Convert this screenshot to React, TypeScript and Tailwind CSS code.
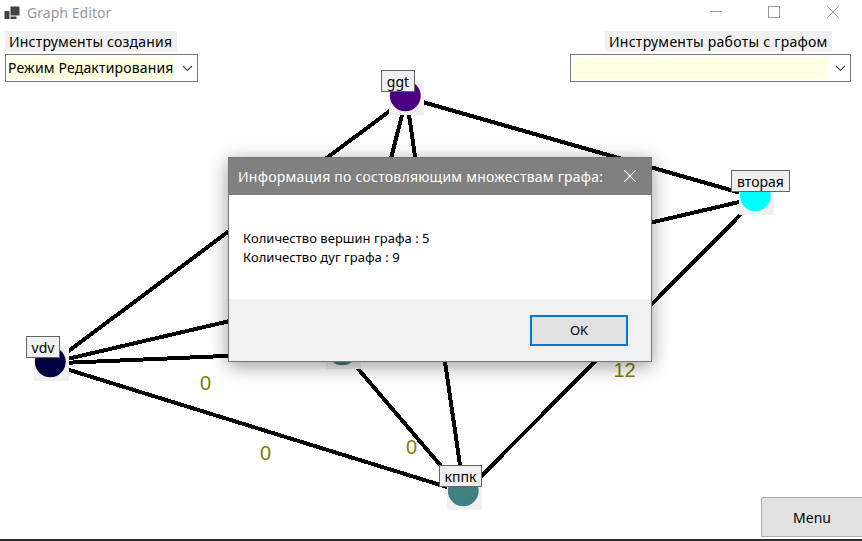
import React from "react";

type Edge = [number, number, number, number];

const edges: Edge[] = [
  [50, 365, 405, 99.5],
  [405, 97, 755, 197],
  [50, 363, 755, 198.3],
  [50, 363.5, 342, 351],
  [50, 364, 463, 492],
  [342, 350, 463, 491.7],
  [406.4, 97, 463.8, 491],
  [406.5, 97, 343, 350],
  [757, 198, 465, 492.5],
];

const nodes = [
  { x: 389, y: 80, color: "#4b0082" },
  { x: 739, y: 180, color: "#00ffff" },
  { x: 34, y: 346, color: "#000040" },
  { x: 326, y: 334, color: "#408080" },
  { x: 447, y: 475, color: "#408080" },
];

const weights = [
  { x: 200, y: 390, text: "0" },
  { x: 260, y: 460, text: "0" },
  { x: 406, y: 454, text: "0" },
  { x: 613.5, y: 377, text: "12" },
];

function Graph() {
  return (
    <svg className="absolute left-0 top-0" width="862" height="541" viewBox="0 0 862 541">
      <g stroke="#000" strokeWidth="4" shapeRendering="crispEdges">
        {edges.map(([x1, y1, x2, y2], i) => (
          <line key={i} x1={x1} y1={y1} x2={x2} y2={y2} />
        ))}
      </g>
      {nodes.map((n, i) => (
        <g key={i}>
          <rect x={n.x} y={n.y} width="35" height="35" fill="#f0f0f0" />
          <circle cx={n.x + 16.3} cy={n.y + 15.8} r="15.4" fill={n.color} />
        </g>
      ))}
      <g fill="#808000" fontSize="20" className="font-['Liberation_Sans',sans-serif]">
        {weights.map((w, i) => (
          <text key={i} x={w.x} y={w.y}>{w.text}</text>
        ))}
      </g>
    </svg>
  );
}

function Tag({ text, className }: { text: string; className: string }) {
  return (
    <div className={`absolute flex h-[22px] items-center justify-center border border-[#646464] bg-[#f0f0f0] pt-[2px] text-[14px] leading-none ${className}`}>
      {text}
    </div>
  );
}

function Chevron() {
  return (
    <svg width="11" height="7" viewBox="0 0 11 7" fill="none" stroke="#444" strokeWidth="1.1">
      <path d="M1 1l4.5 4.5L10 1" />
    </svg>
  );
}

function Combo({ text, className }: { text: string; className: string }) {
  return (
    <div className={`flex h-7 items-center border border-[#7a7a7a] bg-white pl-[2px] pr-[4px] ${className}`}>
      <div className="mr-[8px] flex h-[22px] flex-1 items-center whitespace-nowrap bg-[#ffffe1] pb-[2px] text-[14px] tracking-[0.17px]">{text}</div>
      <Chevron />
    </div>
  );
}

function TitleBar() {
  return (
    <header className="flex h-[31px] items-start justify-between">
      <div className="flex items-center pl-1 pt-[2px]">
        <svg width="17" height="17" viewBox="0 0 17 17" fill="#424242" className="-mt-[2px]">
          <path d="M6.5 2.5h9v9h-9zM0.5 7h5v8h-5zM6.5 12.5h6v2.5h-6z" />
        </svg>
        <span className="ml-[6px] text-[14px] leading-[22px] tracking-[0.05px] text-[#999]">Graph Editor</span>
      </div>
      <svg width="132" height="16" viewBox="0 0 132 16" className="mr-[20px] mt-[4px]" fill="none" stroke="#999">
        <path d="M0 7.5h12M58.5 2.5h11v11h-11z" shapeRendering="crispEdges" />
        <path d="M117 2l12 12M129 2l-12 12" />
      </svg>
    </header>
  );
}

function Dialog() {
  return (
    <section className="absolute left-[228px] top-[157px] flex h-[205px] w-[424px] flex-col border border-[#777] bg-white shadow-[0_4px_18px_rgba(0,0,0,0.4)]">
      <div className="flex h-[37px] shrink-0 items-center justify-between bg-[#808080] pl-[9px] pr-[15px] text-white">
        <h1 className="whitespace-nowrap text-[14px] tracking-[0.23px]">Информация по состовляющим множествам графа:</h1>
        <svg width="12" height="12" viewBox="0 0 12 12" stroke="#fff" strokeWidth="1.1" className="-mt-[2px]">
          <path d="M0 0l12 12M12 0L0 12" />
        </svg>
      </div>
      <div className="flex-1 pl-[14px] pt-[34px] text-[13px] leading-[19px] tracking-[0.03px]">
        <p>Количество вершин графа : 5</p>
        <p>Количество дуг графа : 9</p>
      </div>
      <div className="flex h-[62px] shrink-0 items-center justify-end bg-[#f0f0f0] pr-[23px]">
        <button className="h-[31px] w-[98px] border-2 border-[#0078d7] bg-[#e1e1e1] text-[13px] leading-none">OK</button>
      </div>
    </section>
  );
}

export default function App() {
  return (
    <main className="relative flex h-[541px] w-[862px] flex-col overflow-hidden bg-white font-['Noto_Sans',sans-serif] text-black">
      <TitleBar />
      <div className="flex items-start justify-between pl-[5px] pr-[11px]">
        <div>
          <div className="flex h-5 w-[172px] items-center whitespace-nowrap bg-[#f0f0f0] pl-1 text-[14px] tracking-[0.2px]">Инструменты создания</div>
          <Combo text="Режим Редактирования" className="mt-[3px] w-[193px]" />
        </div>
        <div>
          <div className="ml-[35px] flex h-5 w-[227px] items-center whitespace-nowrap bg-[#f0f0f0] pl-1 text-[14px] tracking-[0.26px]">Инструменты работы с графом</div>
          <Combo text="" className="mt-[3px] w-[281px]" />
        </div>
      </div>
      <div className="mt-auto flex justify-end">
        <button className="-mr-px h-10 w-[102px] border border-[#adadad] bg-[#e1e1e1] text-[14px]">Menu</button>
      </div>
      <div className="mt-[2px] h-[2px] shrink-0 bg-[#2b2b2b]" />
      <Graph />
      <Tag text="ggt" className="left-[381px] top-[70px] w-[34px]" />
      <Tag text="вторая" className="left-[731px] top-[170px] w-[59px]" />
      <Tag text="vdv" className="left-[26px] top-[336px] w-[34px]" />
      <Tag text="кппк" className="left-[439px] top-[465px] w-[43px]" />
      <Dialog />
    </main>
  );
}
